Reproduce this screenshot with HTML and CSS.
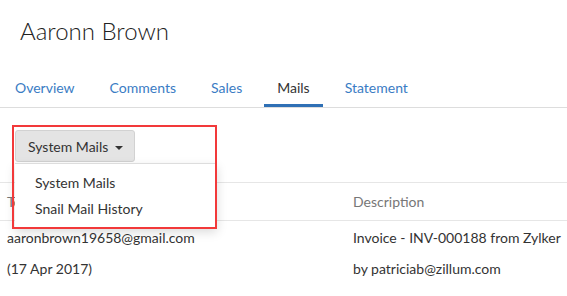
FILE: index.html
```html
<!DOCTYPE html>
<html lang="en">
<head>
  <meta charset="UTF-8" />
  <title>Aaronn Brown - Mails</title>
  <link rel="stylesheet" href="styles.css">
</head>
<body>

<!-- Customer Header -->
<header class="page-head">
  <h1>Aaronn Brown</h1>
</header>

<!-- Tabs -->
<nav class="tabs">
  <a href="#">Overview</a>
  <a href="#">Comments</a>
  <a href="#">Sales</a>
  <a href="#" class="active">Mails</a>
  <a href="#">Statement</a>
</nav>

<!-- Toolbar with dropdown -->
<div class="toolbar">
  <div class="filter">
    <button class="filter-btn">System Mails <span class="caret"></span></button>
    <ul class="menu">
      <li>System Mails</li>
      <li>Snail Mail History</li>
    </ul>
    <div class="highlight"></div>
  </div>
</div>

<!-- Mails Table -->
<table class="mails">
  <thead>
    <tr>
      <th class="col-to">To</th>
      <th>Description</th>
    </tr>
  </thead>
  <tbody>
    <tr>
      <td class="col-to">aaronbrown19658@gmail.com<br><span class="sub">(17 Apr 2017)</span></td>
      <td>Invoice - INV-000188 from Zylker<br><span class="sub">by patriciab@zillum.com</span></td>
    </tr>
  </tbody>
</table>

</body>
</html>
```

FILE: styles.css
```css
body {
  font-family: 'Lato', 'Open Sans', sans-serif;
  background: #fff;
  color: #333;
  margin: 0;
  padding: 0;
}

.page-head {
  padding: 16px 20px 0;
  height: 55px;
}

.page-head h1 {
  margin: 0;
  font-size: 24px;
  font-weight: 300;
  color: #222;
}

.tabs {
  display: flex;
  gap: 9px;
  padding-left: 2px;
  border-bottom: 1px solid #ddd;
}

.tabs a {
  display: block;
  padding: 0 13px 3px;
  line-height: 33px;
  font-size: 14px;
  color: #3a7cc4;
  text-decoration: none;
}

.tabs a.active {
  color: #333;
  padding-bottom: 0;
  border-bottom: 3px solid #2f70b5;
}

.toolbar {
  padding: 22px 15px 20px;
}

.filter {
  position: relative;
  display: inline-block;
}

.filter-btn {
  font-family: inherit;
  font-size: 14px;
  color: #333;
  background: #e4e4e4;
  border: 1px solid #d2d2d2;
  border-radius: 3px;
  height: 32px;
  padding: 0 11px 0 12px;
  white-space: nowrap;
}

.caret {
  display: inline-block;
  margin-left: 3px;
  vertical-align: middle;
  border-top: 4px solid #333;
  border-left: 4px solid transparent;
  border-right: 4px solid transparent;
}

.menu {
  position: absolute;
  top: 33px;
  left: 0;
  width: 202px;
  margin: 0;
  padding: 6px 0;
  list-style: none;
  background: #fff;
  border-top: 1px solid #ddd;
  box-shadow: 0 4px 10px rgba(0, 0, 0, 0.15);
  z-index: 2;
}

.menu li {
  padding: 0 20px;
  line-height: 26px;
  font-size: 14px;
}

.highlight {
  position: absolute;
  left: -3px;
  top: -5px;
  width: 201px;
  height: 100px;
  border: 2px solid #f2393a;
  z-index: 3;
}

.mails {
  width: 100%;
  border-collapse: collapse;
  font-size: 14px;
}

.mails th {
  text-align: left;
  font-weight: 400;
  color: #777;
  height: 37px;
  border-top: 1px solid #e6e6e6;
  border-bottom: 1px solid #e6e6e6;
  padding: 0 0 0 7px;
}

.mails td {
  padding: 1px 0 0 7px;
  line-height: 31px;
  vertical-align: top;
}

.mails th.col-to,
.mails td.col-to {
  width: 339px;
}
```
